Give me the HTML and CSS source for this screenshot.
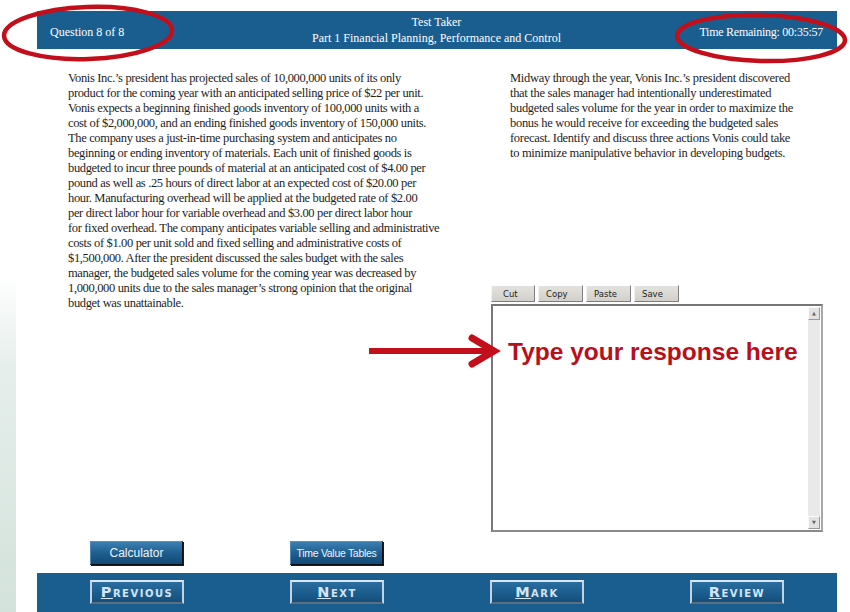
FILE: index.html
```html
<!DOCTYPE html>
<html>
<head>
<meta charset="utf-8">
<title>Test Taker</title>
<link rel="stylesheet" href="styles.css">
</head>
<body>
<div class="page">
  <header class="topbar">
    <div class="qnum">Question 8 of 8</div>
    <div class="title">
      <div>Test Taker</div>
      <div>Part 1 Financial Planning, Performance and Control</div>
    </div>
    <div class="timer">Time Remaining: 00:35:57</div>
  </header>

  <main class="content">
    <section class="passage">
      Vonis Inc.’s president has projected sales of 10,000,000 units of its only<br>
      product for the coming year with an anticipated selling price of $22 per unit.<br>
      Vonis expects a beginning finished goods inventory of 100,000 units with a<br>
      cost of $2,000,000, and an ending finished goods inventory of 150,000 units.<br>
      The company uses a just-in-time purchasing system and anticipates no<br>
      beginning or ending inventory of materials. Each unit of finished goods is<br>
      budgeted to incur three pounds of material at an anticipated cost of $4.00 per<br>
      pound as well as .25 hours of direct labor at an expected cost of $20.00 per<br>
      hour. Manufacturing overhead will be applied at the budgeted rate of $2.00<br>
      per direct labor hour for variable overhead and $3.00 per direct labor hour<br>
      for fixed overhead. The company anticipates variable selling and administrative<br>
      costs of $1.00 per unit sold and fixed selling and administrative costs of<br>
      $1,500,000. After the president discussed the sales budget with the sales<br>
      manager, the budgeted sales volume for the coming year was decreased by<br>
      1,000,000 units due to the sales manager’s strong opinion that the original<br>
      budget was unattainable.
    </section>

    <section class="task">
      <p class="prompt">
        Midway through the year, Vonis Inc.’s president discovered<br>
        that the sales manager had intentionally underestimated<br>
        budgeted sales volume for the year in order to maximize the<br>
        bonus he would receive for exceeding the budgeted sales<br>
        forecast. Identify and discuss three actions Vonis could take<br>
        to minimize manipulative behavior in developing budgets.
      </p>
      <div class="toolbar">
        <button class="tb-btn tb-cut">Cut</button>
        <button class="tb-btn">Copy</button>
        <button class="tb-btn">Paste</button>
        <button class="tb-btn">Save</button>
      </div>
      <div class="editor">
        <div class="editor-area">
          <span class="hint">Type your response here</span>
        </div>
        <div class="scrollbar">
          <span class="sb-arrow">&#9650;</span>
          <span class="sb-track"></span>
          <span class="sb-arrow">&#9660;</span>
        </div>
      </div>
    </section>
  </main>

  <div class="tools">
    <button class="tool">Calculator</button>
    <button class="tool tool-small">Time Value Tables</button>
  </div>

  <footer class="navbar">
    <button class="nav-btn"><u>P</u>revious</button>
    <button class="nav-btn"><u>N</u>ext</button>
    <button class="nav-btn"><u>M</u>ark</button>
    <button class="nav-btn"><u>R</u>eview</button>
  </footer>
</div>

<svg class="annotations" width="850" height="612" viewBox="0 0 850 612">
  <ellipse cx="88" cy="33" rx="84" ry="26" fill="none" stroke="#c20f1b" stroke-width="4.5" transform="rotate(-2 88 33)"/>
  <ellipse cx="761" cy="38" rx="84" ry="23" fill="none" stroke="#c20f1b" stroke-width="4.5" transform="rotate(1.5 761 38)"/>
  <line x1="369" y1="351" x2="492" y2="351" stroke="#c20f1b" stroke-width="6"/>
  <polyline points="472,338 494,351 472,364" fill="none" stroke="#c20f1b" stroke-width="7" stroke-linejoin="miter" stroke-linecap="round"/>
</svg>
</body>
</html>
```

FILE: styles.css
```css
* {
  box-sizing: border-box;
}

body {
  margin: 0;
  width: 850px;
  height: 612px;
  overflow: hidden;
  position: relative;
  font-family: "Liberation Serif", "Times New Roman", serif;
  color: #1e1e1e;
  background:
    linear-gradient(to bottom, rgba(228, 237, 233, 0) 45%, #e6eeeb 60%, #d3e2db 100%) left top / 16px 100% no-repeat,
    #ffffff;
}

.page {
  margin-left: 37px;
  width: 800px;
  padding-top: 11px;
}

/* ---------- header ---------- */
.topbar {
  height: 38px;
  background: #1a5e8f;
  color: #ffffff;
  display: grid;
  grid-template-columns: 1fr auto 1fr;
  align-items: center;
  font-size: 12px;
  padding: 0 14px 0 13px;
}

.qnum {
  padding-top: 4px;
}

.title {
  text-align: center;
  line-height: 16px;
}

.timer {
  justify-self: end;
  padding-top: 4px;
  letter-spacing: -0.25px;
}

/* ---------- content ---------- */
.content {
  display: grid;
  grid-template-columns: 372px 332px;
  column-gap: 51px;
  padding-left: 31px;
  margin-top: 22px;
}

.passage,
.prompt {
  font-size: 12.5px;
  line-height: 15px;
  letter-spacing: -0.35px;
  white-space: nowrap;
  margin: 0;
}

.prompt {
  padding-left: 19px;
  letter-spacing: -0.3px;
}

.toolbar {
  display: flex;
  gap: 3px;
  margin-top: 124px;
  height: 17px;
}

.tb-btn {
  width: 45px;
  height: 17px;
  padding: 0 0 0 7px;
  text-align: left;
  font-family: "DejaVu Sans", "Liberation Sans", sans-serif;
  font-size: 8.5px;
  color: #222;
  background: linear-gradient(#e4e2de, #d3d0cb);
  border: 1px solid;
  border-color: #ffffff #7d7d7d #7d7d7d #f2f2f2;
}

.tb-cut {
  width: 44px;
  padding-left: 11px;
}

.editor {
  margin-top: 2px;
  height: 228px;
  display: flex;
  border: 2px solid;
  border-color: #777777 #a8a8a8 #8a8a8a #777777;
  background: #ffffff;
}

.editor-area {
  flex: 1;
  padding: 32px 0 0 15px;
}

.hint {
  font-family: "Liberation Sans", Arial, sans-serif;
  font-weight: bold;
  font-size: 24.5px;
  line-height: 28px;
  color: #b80f1a;
}

.scrollbar {
  width: 12px;
  display: flex;
  flex-direction: column;
  background: #e9e9e9;
  margin: 1px 1px 1px 0;
}

.sb-arrow {
  height: 13px;
  background: #e2e2e2;
  border: 1px solid;
  border-color: #fafafa #9a9a9a #9a9a9a #fafafa;
  font-family: "DejaVu Sans", sans-serif;
  font-size: 5px;
  line-height: 11px;
  text-align: center;
  color: #666;
}

.sb-track {
  flex: 1;
}

/* ---------- tool buttons ---------- */
.tools {
  display: flex;
  gap: 107px;
  padding-left: 53px;
  margin-top: 9px;
}

.tool {
  width: 93px;
  height: 24px;
  padding: 0;
  font-family: "Liberation Sans", Arial, sans-serif;
  font-size: 12px;
  color: #eef4fa;
  background: linear-gradient(#3b7fb2, #1d5c8c 55%, #124a76);
  border: 1px solid;
  border-color: #5b93bf #0b0f14 #0b0f14 #4f88b5;
  box-shadow: 1px 1px 0 #1b1b1b;
}

.tool-small {
  font-size: 10.5px;
  letter-spacing: -0.3px;
}

/* ---------- bottom navigation ---------- */
.navbar {
  margin-top: 8px;
  height: 39px;
  background: #1a5e8f;
  display: flex;
  gap: 106px;
  padding: 7px 0 0 53px;
}

.nav-btn {
  width: 94px;
  height: 24px;
  padding: 0;
  font-family: "DejaVu Sans", "Liberation Sans", sans-serif;
  font-weight: bold;
  font-size: 14.5px;
  font-variant: small-caps;
  letter-spacing: 1.5px;
  color: #d4e5f3;
  background: linear-gradient(#2a6d9f, #1b5b8b 60%, #154f7c);
  border: 2px solid;
  border-color: #dbe6ef #c3d3e0 #5a6f80 #c3d3e0;
}

.nav-btn u {
  text-decoration-thickness: 1px;
  text-underline-offset: 1px;
}

/* ---------- annotations ---------- */
.annotations {
  position: absolute;
  left: 0;
  top: 0;
  pointer-events: none;
}
```
